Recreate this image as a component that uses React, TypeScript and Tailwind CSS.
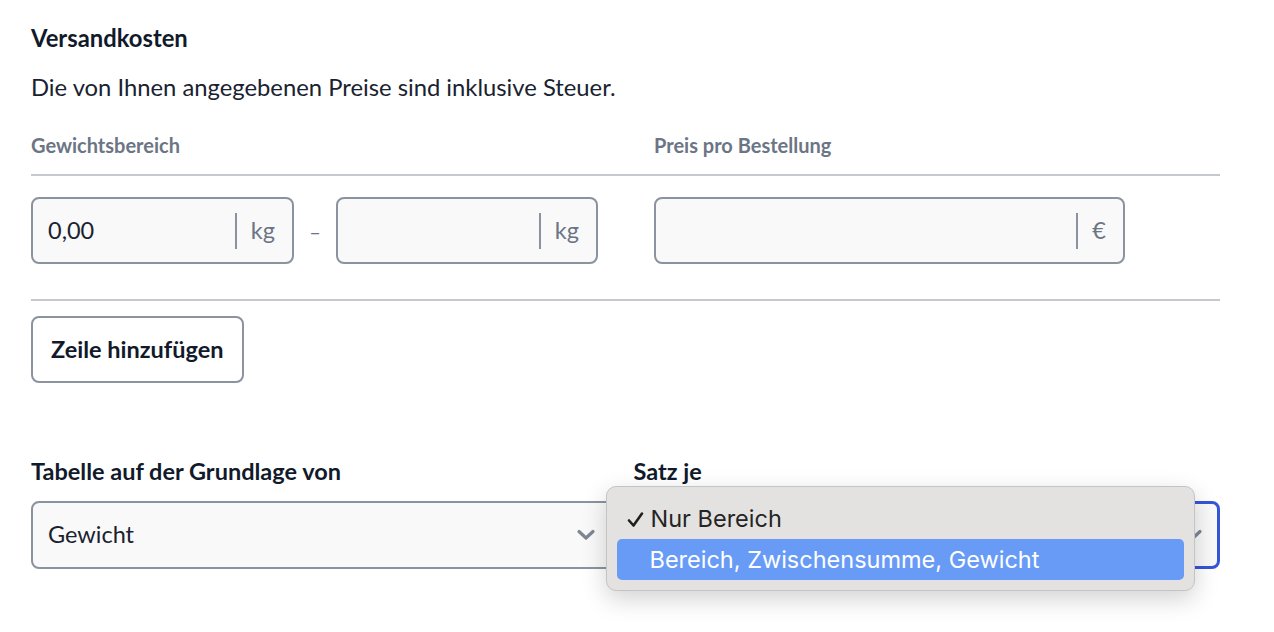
import {useState} from "react";

function UnitInput({value, unit, width}: {value: string; unit: string; width: string}) {
    return (
        <div className={`flex h-[67px] ${width} items-center rounded-lg border-2 border-[#8a939f] bg-[#f9f9f9]`}>
            <div className="flex-1 pl-[15px] text-[23.5px] text-[#1a2230]">{value}</div>
            <div className="flex h-full items-center pr-[17px]">
                <div className="h-[36px] w-[2px] bg-[#8a939f]"></div>
                <span className="pl-[14px] text-[23.5px] text-[#6b7585]">{unit}</span>
            </div>
        </div>
    );
}

function Chevron() {
    return (
        <svg width="20" height="12" viewBox="0 0 20 12" fill="none">
            <path d="M3 2.5 L10 9 L17 2.5" stroke="#7d8794" strokeWidth="3.2" strokeLinecap="round" strokeLinejoin="round"/>
        </svg>
    );
}

function App() {
    const [options] = useState(["Nur Bereich", "Bereich, Zwischensumme, Gewicht"]);

    return (
        <div className="min-h-[632px] bg-white font-['Lato',sans-serif]">
            <div className="w-[1220px] pl-[31px] pt-[24px]">
                <h2 className="text-[23.8px] font-bold leading-[28px] text-[#111a2b]">Versandkosten</h2>
                <p className="mt-[21px] text-[23.8px] leading-[28px] text-[#1a2230]">Die von Ihnen angegebenen Preise sind inklusive Steuer.</p>

                <div className="mt-[32px] flex border-b-2 border-[#c5c9ce] pb-[17px] text-[20px] font-bold leading-[24px] text-[#6b7585]">
                    <div className="w-[623px]">Gewichtsbereich</div>
                    <div>Preis pro Bestellung</div>
                </div>

                <div className="flex items-center border-b-2 border-[#c5c9ce] pb-[35px] pt-[21px]">
                    <UnitInput value="0,00" unit="kg" width="w-[263px]"/>
                    <span className="w-[42px] text-center text-[20px] text-[#6b7585]">–</span>
                    <UnitInput value="" unit="kg" width="w-[262px]"/>
                    <div className="w-[56px]"></div>
                    <UnitInput value="" unit="€" width="w-[471px]"/>
                </div>

                <button className="mt-[15px] h-[67px] rounded-lg border-2 border-[#8a939f] bg-white px-[18px] text-[23.5px] font-bold text-[#111a2b]">
                    Zeile hinzufügen
                </button>

                <div className="mt-[74px] grid grid-cols-2 gap-4">
                    <div>
                        <div className="text-[23.5px] font-bold leading-[28px] text-[#111a2b]">Tabelle auf der Grundlage von</div>
                        <div className="mt-[16px] flex h-[68px] items-center justify-between rounded-lg border-2 border-[#8a939f] bg-[#f9f9f9] pl-[15px] pr-[20px]">
                            <span className="text-[23.5px] text-[#1a2230]">Gewicht</span>
                            <Chevron/>
                        </div>
                    </div>
                    <div className="relative">
                        <div className="text-[23.5px] font-bold leading-[28px] text-[#111a2b]">Satz je</div>
                        <div className="mt-[16px] flex h-[68px] items-center justify-end rounded-lg border-[3px] border-[#3556d6] bg-[#f9f9f9] pr-[14px]">
                            <Chevron/>
                        </div>

                        <div className="absolute left-[-28px] top-[29px] w-[589px] rounded-[10px] border border-[#c4c4c4] bg-[#e3e2e0] px-[10px] pb-[10px] pt-[13px] font-['Inter',sans-serif] shadow-[0_8px_24px_rgba(0,0,0,0.18)]">
                            <div className="flex h-[38px] items-center pl-[10px] text-[23.5px] text-[#252525]">
                                <svg className="mr-[7px]" width="17" height="17" viewBox="0 0 17 17" fill="none">
                                    <path d="M2 9.5 L6.5 14.5 L15 2.5" stroke="#1f1f1f" strokeWidth="2.6" strokeLinecap="round" strokeLinejoin="round"/>
                                </svg>
                                <span>{options[0]}</span>
                            </div>
                            <div className="mt-[1px] flex h-[41px] items-center rounded-[5px] bg-[#689bf6] pl-[33px] text-[23.5px] text-white">
                                {options[1]}
                            </div>
                        </div>
                    </div>
                </div>
            </div>
        </div>
    );
}

export default App
